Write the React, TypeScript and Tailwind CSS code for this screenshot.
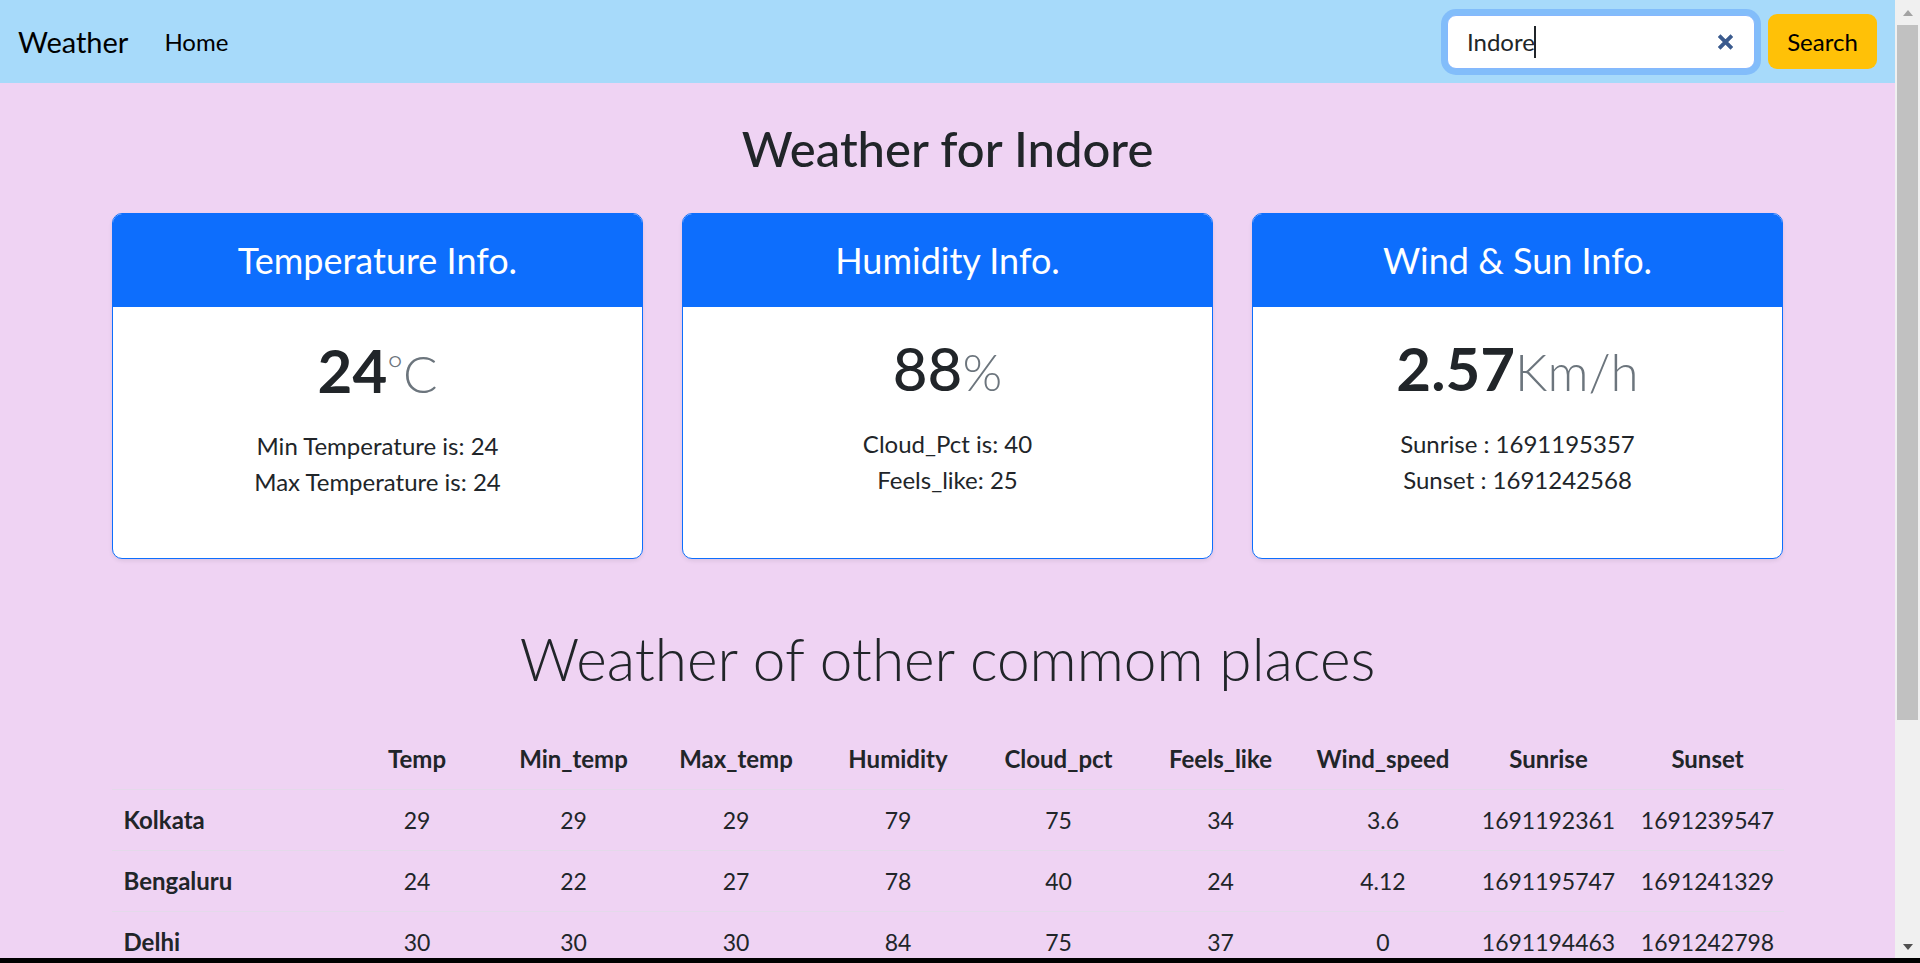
import React from "react";

const rows = [
  ["Kolkata", "29", "29", "29", "79", "75", "34", "3.6", "1691192361", "1691239547"],
  ["Bengaluru", "24", "22", "27", "78", "40", "24", "4.12", "1691195747", "1691241329"],
  ["Delhi", "30", "30", "30", "84", "75", "37", "0", "1691194463", "1691242798"],
];

const heads = ["Temp", "Min_temp", "Max_temp", "Humidity", "Cloud_pct", "Feels_like", "Wind_speed", "Sunrise", "Sunset"];

function InfoCard({
  title,
  value,
  unit,
  bold,
  lines,
}: {
  title: string;
  value: string;
  unit: React.ReactNode;
  bold?: boolean;
  lines: string[];
}) {
  return (
    <div className="rounded-[10px] border border-[#0d6efd] bg-white overflow-hidden shadow-[0_2px_4px_rgba(0,0,0,0.08)] text-center">
      <div className="h-[93px] bg-[#0d6efd] flex items-center justify-center">
        <h4 className="text-[36px] leading-[1.2] text-white font-normal">{title}</h4>
      </div>
      <div className="pt-[25px] pb-[58px]">
        <h1 className={`text-[60px] leading-[72px] mb-[18px] ${bold ? "font-bold" : "font-medium"}`}>
          {value}
          <small className="text-[51px] font-light text-[#6c757d]">{unit}</small>
        </h1>
        <ul className="text-[24px] leading-[36px]">
          {lines.map((l) => (
            <li key={l}>{l}</li>
          ))}
        </ul>
      </div>
    </div>
  );
}

function Scrollbar() {
  return (
    <div className="w-[25px] shrink-0 bg-[#f0f0f0] flex flex-col">
      <div className="h-[25px] flex items-center justify-center">
        <svg width="10" height="6" viewBox="0 0 10 6">
          <path d="M0 6L5 0L10 6Z" fill="#a3a3a3" />
        </svg>
      </div>
      <div className="h-[695px] mx-[2px] bg-[#c1c1c1]" />
      <div className="flex-1" />
      <div className="h-[22px] flex items-center justify-center">
        <svg width="10" height="6" viewBox="0 0 10 6">
          <path d="M0 0L5 6L10 0Z" fill="#505050" />
        </svg>
      </div>
    </div>
  );
}

export default function App() {
  return (
    <div className="h-screen flex flex-col bg-black font-[Lato,sans-serif] text-[#212529]">
      <div className="flex-1 flex min-h-0">
        <div className="flex-1 min-w-0 overflow-hidden bg-[#efd3f3]">
          {/* Navbar */}
          <nav className="h-[83px] bg-[#a7dafa] flex items-center justify-between px-[18px]">
            <div className="flex items-center">
              <a className="text-[29px] leading-[1.5] text-black">Weather</a>
              <a className="ml-[36px] text-[24px] leading-[1.5] text-black">Home</a>
            </div>
            <form className="flex items-center gap-[13px]" onSubmit={(e) => e.preventDefault()}>
              <div className="relative">
                <input
                  type="search"
                  defaultValue="Indore"
                  className="w-[308px] h-[54px] rounded-[9px] border border-[#86b7fe] bg-white pl-[19px] pr-[50px] text-[24px] text-[#212529] outline-none caret-transparent shadow-[0_0_0_6px_#82bdfa] [&::-webkit-search-cancel-button]:appearance-none"
                />
                {/* text caret */}
                <span className="absolute left-[87px] top-[11px] h-[32px] w-[2px] bg-[#212529]" />
                <svg
                  className="absolute right-[21px] top-1/2 -translate-y-1/2 w-[17px] h-[17px]"
                  viewBox="0 0 16 16"
                >
                  <path d="M2 2L14 14M14 2L2 14" stroke="#3b5b8e" strokeWidth={3.6} />
                </svg>
              </div>
              <button className="w-[109px] h-[55px] rounded-[9px] bg-[#ffc107] text-[24px] text-black">
                Search
              </button>
            </form>
          </nav>

          <main className="pt-[36px]">
            <h1 className="text-center text-[49px] leading-[1.2] font-medium mb-[35px]">Weather for Indore</h1>

            <div className="w-[1671px] mx-auto grid grid-cols-3 gap-[39px]">
              <InfoCard
                title="Temperature Info."
                value="24"
                unit={
                  <>
                    <span className="text-[38px] align-[10px]">°</span>C
                  </>
                }
                bold
                lines={["Min Temperature is: 24", "Max Temperature is: 24"]}
              />
              <InfoCard
                title="Humidity Info."
                value="88"
                unit="%"
                lines={["Cloud_Pct is: 40", "Feels_like: 25"]}
              />
              <InfoCard
                title="Wind & Sun Info."
                value="2.57"
                unit="Km/h"
                bold
                lines={["Sunrise : 1691195357", "Sunset : 1691242568"]}
              />
            </div>

            <h2 className="mt-[63px] mb-[35px] text-center text-[58.5px] leading-[72px] font-light">
              Weather of other commom places
            </h2>

            <table className="w-[1671px] mx-auto table-fixed text-[24px] leading-[36px]">
              <colgroup>
                <col className="w-[228px]" />
                <col className="w-[155px]" />
                <col className="w-[158px]" />
                <col className="w-[167px]" />
                <col className="w-[157px]" />
                <col className="w-[164px]" />
                <col className="w-[160px]" />
                <col className="w-[165px]" />
                <col className="w-[166px]" />
                <col className="w-[152px]" />
              </colgroup>
              <thead>
                <tr className="border-b border-[#e4d9ea]">
                  <th className="py-[12px] px-[12px]"></th>
                  {heads.map((h) => (
                    <th key={h} className="py-[12px] px-[6px] font-bold text-center">
                      {h}
                    </th>
                  ))}
                </tr>
              </thead>
              <tbody>
                {rows.map((r) => (
                  <tr key={r[0]} className="border-b border-[#e4d9ea]">
                    <th scope="row" className="py-[12px] px-[12px] text-left font-bold">
                      {r[0]}
                    </th>
                    {r.slice(1).map((c, i) => (
                      <td key={i} className="py-[12px] px-[6px] text-center text-[23px]">
                        {c}
                      </td>
                    ))}
                  </tr>
                ))}
              </tbody>
            </table>
          </main>
        </div>
        <Scrollbar />
      </div>
      <div className="h-[5px] bg-black" />
    </div>
  );
}
